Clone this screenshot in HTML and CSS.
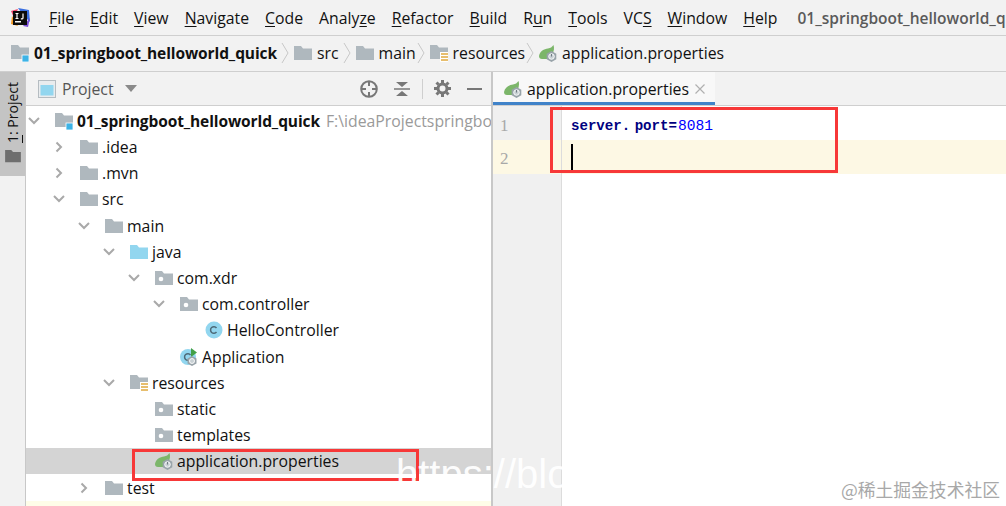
FILE: index.html
```html
<!DOCTYPE html>
<html lang="en">
<head>
<meta charset="utf-8">
<title>IntelliJ IDEA</title>
<link rel="stylesheet" href="styles.css">
</head>
<body>
<svg class="defs" width="0" height="0">
  <defs>
    <symbol id="folder" viewBox="0 0 18 16"><path d="M0 1h7l2 2.500h9V15H0z" fill="#afb8be"/></symbol>
    <symbol id="folder-blue" viewBox="0 0 18 16"><path d="M0 1h7l2 2.500h9V15H0z" fill="#92d6ef"/></symbol>
    <symbol id="package" viewBox="0 0 18 16"><path d="M0 1h7l2 2.500h9V15H0z" fill="#afb8be"/><circle cx="6" cy="9" r="2.300" fill="#fff"/></symbol>
    <symbol id="module" viewBox="0 0 18 18"><path d="M0 1h7l2 2.500h9V15H0z" fill="#afb8be"/><rect x="11" y="11" width="7" height="7" fill="#3db3e6" stroke="#fff" stroke-width=".8"/></symbol>
    <symbol id="resources" viewBox="0 0 18 18"><path d="M0 1h7l2 2.500h9V15H0z" fill="#afb8be"/><rect x="10" y="8" width="8" height="10" fill="#fff"/><path d="M11 10h7M11 13h7M11 16h7" stroke="#e0a93f" stroke-width="1.500"/></symbol>
    <symbol id="spring" viewBox="0 0 18 18"><path d="M0 12C1 7 5 5 9 4.500c2.500-.3 4-1.500 5.500-3.500 1 3 .5 6-1 9L8 15H3C1 15 0 14 0 12z" fill="#7cb66a"/><path d="M12.500 7l4.800 2.800v5.400L12.500 18l-4.800-2.800V9.800z" fill="#98a3a9"/><circle cx="12.500" cy="12.500" r="2.800" fill="#c8d0d4" stroke="#fff" stroke-width=".9"/><path d="M12.500 10v2.500" stroke="#6f7b82"/></symbol>
    <symbol id="cls" viewBox="0 0 18 18"><circle cx="9" cy="9" r="8.500" fill="#92d6ef"/><path d="M11.500 7a3.300 3.300 0 1 0 0 4" fill="none" stroke="#4d6a78" stroke-width="1.500"/></symbol>
    <symbol id="app" viewBox="0 0 18 18"><circle cx="8" cy="9" r="8" fill="#92d6ef"/><path d="M10.500 7a3.300 3.300 0 1 0 0 4" fill="none" stroke="#4d6a78" stroke-width="1.500"/><path d="M11 0l6 4.500-6 4.500z" fill="#43a047"/><path d="M12 8l4.500 2.500v5L12 18l-4.500-2.500v-5z" fill="#98a3a9"/><circle cx="12" cy="13" r="2.500" fill="#c8d0d4" stroke="#fff" stroke-width=".9"/></symbol>
    <symbol id="right" viewBox="0 0 10 12"><path d="M2.500 1.500 7 6l-4.500 4.500" fill="none" stroke="#a9a9a9" stroke-width="2"/></symbol>
    <symbol id="down" viewBox="0 0 12 10"><path d="M1 2l5 5 5-5" fill="none" stroke="#a9a9a9" stroke-width="2"/></symbol>
    <symbol id="sep" viewBox="0 0 8 22"><path d="M1 1l6 10-6 10" fill="none" stroke="#c8c8c8"/></symbol>
  </defs>
</svg>

<div class="menubar">
  <svg class="logo" width="20" height="20" viewBox="0 0 20 20">
    <path d="M1 3 8 1 4 10z" fill="#f0436b"/><path d="M8 0 19 2 20 14 14 8z" fill="#3a6fe0"/><path d="M2 8 8 18 1 16z" fill="#f59a23"/><path d="M13 18 20 10 18 19z" fill="#7b4fd8"/>
    <rect x="3" y="3" width="14" height="14" fill="#0c0c0c"/>
    <rect x="5" y="13" width="6" height="1.500" fill="#fff"/>
    <path d="M5.500 5.500h3M7 5.500v5M5.500 10.500h3M13 5.500v4.500c0 1-1.500 1-2 .5" fill="none" stroke="#fff" stroke-width="1.200"/>
  </svg>
  <nav class="menus">
    <span><u>F</u>ile</span><span><u>E</u>dit</span><span><u>V</u>iew</span><span><u>N</u>avigate</span><span><u>C</u>ode</span><span>Analy<u>z</u>e</span><span><u>R</u>efactor</span><span><u>B</u>uild</span><span>R<u>u</u>n</span><span><u>T</u>ools</span><span>VC<u>S</u></span><span><u>W</u>indow</span><span><u>H</u>elp</span>
  </nav>
  <span class="wintitle">01_springboot_helloworld_quick</span>
</div>

<div class="crumbs">
  <svg class="ic18" width="18" height="18"><use href="#module"/></svg><b>01_springboot_helloworld_quick</b>
  <svg class="sep" width="8" height="22"><use href="#sep"/></svg>
  <svg class="ic18" width="18" height="16"><use href="#folder"/></svg><span>src</span>
  <svg class="sep" width="8" height="22"><use href="#sep"/></svg>
  <svg class="ic18" width="18" height="16"><use href="#folder"/></svg><span>main</span>
  <svg class="sep tight" width="8" height="22"><use href="#sep"/></svg>
  <svg class="ic18" width="18" height="18"><use href="#resources"/></svg><span>resources</span>
  <svg class="sep tight" width="8" height="22"><use href="#sep"/></svg>
  <svg class="ic18" width="18" height="18"><use href="#spring"/></svg><span>application.properties</span>
</div>

<div class="main">
  <aside class="stripe">
    <div class="stripe-btn">
      <span class="stripe-label"><u>1</u>: Project</span>
      <svg width="16" height="14" viewBox="0 0 18 16"><path d="M0 1h7l2 2.500h9V15H0z" fill="#6e6e6e"/></svg>
    </div>
  </aside>

  <section class="project">
    <header class="panel-head">
      <svg class="panel-ic" width="18" height="18" viewBox="0 0 18 18"><rect x=".5" y=".5" width="17" height="17" fill="#e9ecee" stroke="#b5bcc1"/><rect x="2.500" y="5" width="13" height="10.500" fill="#92d6ef"/></svg>
      <span class="panel-title">Project</span>
      <svg class="caret" width="12" height="7"><path d="M0 0h12L6 7z" fill="#8a8a8a"/></svg>
      <div class="tools">
        <svg width="18" height="18" viewBox="0 0 18 18"><circle cx="9" cy="9" r="7.800" fill="none" stroke="#777" stroke-width="2"/><path d="M9 1v5M9 12v5M1 9h5M12 9h5" stroke="#777" stroke-width="2"/></svg>
        <svg width="18" height="18" viewBox="0 0 18 18"><path d="M1 9h16" stroke="#777" stroke-width="1.500"/><path d="M3 2h12L9 7zM3 16h12L9 11z" fill="#777"/></svg>
        <i class="tool-sep"></i>
        <svg width="17" height="17" viewBox="0 0 17 17"><circle cx="8.500" cy="8.500" r="4.500" fill="none" stroke="#777" stroke-width="3"/><path d="M8.500 0v3M8.500 14v3M0 8.500h3M14 8.500h3M2.500 2.500l2 2M12.500 12.500l2 2M14.500 2.500l-2 2M4.500 12.500l-2 2" stroke="#777" stroke-width="3"/></svg>
        <i class="minus"></i>
      </div>
    </header>
    <div class="tree">
      <div class="row l0"><svg class="arrow" width="12" height="10"><use href="#down"/></svg><svg class="ic" width="18" height="18"><use href="#module"/></svg><b>01_springboot_helloworld_quick</b><span class="path">F:\ideaProjectspringboot</span></div>
      <div class="row l1"><svg class="arrow" width="12" height="12"><use href="#right"/></svg><svg class="ic" width="18" height="16"><use href="#folder"/></svg><span>.idea</span></div>
      <div class="row l1"><svg class="arrow" width="12" height="12"><use href="#right"/></svg><svg class="ic" width="18" height="16"><use href="#folder"/></svg><span>.mvn</span></div>
      <div class="row l1"><svg class="arrow" width="12" height="10"><use href="#down"/></svg><svg class="ic" width="18" height="16"><use href="#folder"/></svg><span>src</span></div>
      <div class="row l2"><svg class="arrow" width="12" height="10"><use href="#down"/></svg><svg class="ic" width="18" height="16"><use href="#folder"/></svg><span>main</span></div>
      <div class="row l3"><svg class="arrow" width="12" height="10"><use href="#down"/></svg><svg class="ic" width="18" height="16"><use href="#folder-blue"/></svg><span>java</span></div>
      <div class="row l4"><svg class="arrow" width="12" height="10"><use href="#down"/></svg><svg class="ic" width="18" height="16"><use href="#package"/></svg><span>com.xdr</span></div>
      <div class="row l5"><svg class="arrow" width="12" height="10"><use href="#down"/></svg><svg class="ic" width="18" height="16"><use href="#package"/></svg><span>com.controller</span></div>
      <div class="row l6"><i class="arrow"></i><svg class="ic" width="18" height="18"><use href="#cls"/></svg><span>HelloController</span></div>
      <div class="row l5"><i class="arrow"></i><svg class="ic" width="18" height="18"><use href="#app"/></svg><span>Application</span></div>
      <div class="row l3"><svg class="arrow" width="12" height="10"><use href="#down"/></svg><svg class="ic" width="18" height="18"><use href="#resources"/></svg><span>resources</span></div>
      <div class="row l4"><i class="arrow"></i><svg class="ic" width="18" height="16"><use href="#package"/></svg><span>static</span></div>
      <div class="row l4"><i class="arrow"></i><svg class="ic" width="18" height="16"><use href="#package"/></svg><span>templates</span></div>
      <div class="row l4 selected"><i class="arrow"></i><svg class="ic" width="18" height="18"><use href="#spring"/></svg><span>application.properties</span></div>
      <div class="row l2"><svg class="arrow" width="12" height="12"><use href="#right"/></svg><svg class="ic" width="18" height="16"><use href="#folder"/></svg><span>test</span></div>
      <div class="row tinted"></div>
    </div>
  </section>

  <section class="editor">
    <div class="tabs">
      <div class="tab">
        <svg width="18" height="18"><use href="#spring"/></svg>
        <span>application.properties</span>
        <svg class="close" width="10" height="10"><path d="M.5.500l9 9M9.500.500l-9 9" stroke="#b0b0b0" stroke-width="1.200"/></svg>
      </div>
    </div>
    <div class="code">
      <div class="gutter">
        <div class="num">1</div>
        <div class="num current">2</div>
      </div>
      <div class="lines">
        <div class="line"><span class="key">server. port</span>=<span class="val">8081</span></div>
        <div class="line current"><i class="cursor"></i></div>
      </div>
    </div>
  </section>
</div>

<div class="mark mark-top"></div>
<div class="mark mark-tree"></div>
<div class="wm-url">https://blog</div>
<div class="wm-site">@稀土掘金技术社区</div>
</body>
</html>
```

FILE: styles.css
```css
* { box-sizing: border-box; }
html, body { margin: 0; height: 100%; overflow: hidden; }
body {
  width: 1006px;
  height: 506px;
  position: relative;
  display: flex;
  flex-direction: column;
  background: #f2f2f2;
  color: #111;
  font: 15.8px "Open Sans", "Noto Sans", sans-serif;
}
.defs { position: absolute; }
u { text-underline-offset: 2px; text-decoration-thickness: 1px; }

.menubar {
  height: 36px;
  flex: none;
  display: flex;
  align-items: center;
  padding-left: 10px;
  border-bottom: 1px solid #cfcfcf;
  white-space: nowrap;
  overflow: hidden;
}
.logo { flex: none; margin-right: 19px; }
.menus { display: flex; gap: 16px; }
.wintitle { margin-left: 20px; font-weight: 600; font-size: 15.500px; color: #5a5a5a; }

.crumbs {
  height: 36px;
  flex: none;
  display: flex;
  align-items: center;
  padding: 0 0 2px 11px;
  border-bottom: 1px solid #cfcfcf;
  white-space: nowrap;
}
.crumbs b { font-weight: 700; font-size: 15.500px; margin-left: 5px; letter-spacing: -.1px; }
.crumbs span { margin-left: 5px; }
.ic18 { flex: none; }
.sep { flex: none; margin: 0 5px 0 4px; }
.sep.tight { margin-left: 1px; }

.main { flex: 1; display: flex; min-height: 0; }

.stripe { width: 26px; flex: none; border-right: 1px solid #c8c8c8; background: #f2f2f2; }
.stripe-btn {
  height: 104px;
  background: #c4c4c4;
  display: flex;
  flex-direction: column;
  align-items: center;
  gap: 6px;
  padding-top: 10px;
  font-size: 14px;
}
.stripe-label { writing-mode: vertical-rl; transform: rotate(180deg); white-space: nowrap; }

.project { width: 467px; flex: none; display: flex; flex-direction: column; background: #fff; border-right: 2px solid #c8c8c8; overflow: hidden; }
.panel-head {
  height: 34px;
  flex: none;
  display: flex;
  align-items: center;
  padding-left: 12px;
  background: #f2f2f2;
  border-bottom: 1px solid #cfcfcf;
}
.panel-ic { flex: none; }
.panel-title { margin-left: 6px; color: #555; }
.caret { margin-left: 11px; }
.tools { margin-left: auto; display: flex; align-items: center; gap: 15px; padding-right: 9px; }
.tool-sep { width: 1px; height: 20px; background: #cfcfcf; margin: 0 -4px; }
.minus { width: 15px; height: 2px; background: #777; margin-left: 1px; }

.tree { padding-top: 1.800px; }
.row { height: 26.200px; display: flex; align-items: center; white-space: nowrap; }
.arrow { flex: none; width: 12px; margin-right: 15px; }
.ic { flex: none; margin-right: 4px; }
.row b { font-weight: 700; font-size: 15.500px; letter-spacing: -.1px; }
.path { color: #9a9a9a; margin-left: 6px; }
.l0 { padding-left: 2px; }
.l1 { padding-left: 27px; }
.l2 { padding-left: 52px; }
.l3 { padding-left: 77px; }
.l4 { padding-left: 102px; }
.l5 { padding-left: 127px; }
.l6 { padding-left: 152px; }
.selected { background: #d4d4d4; }
.tinted { background: #fefde8; }

.editor { flex: 1; display: flex; flex-direction: column; min-width: 0; }
.tabs { height: 34px; flex: none; border-bottom: 1px solid #cfcfcf; }
.tab {
  width: 222px;
  height: 33px;
  display: flex;
  align-items: center;
  padding: 4px 0 0 11px;
  gap: 5px;
  background: #f8f8f8;
  border-bottom: 3px solid #4083c9;
}
.tab svg { flex: none; }
.close { margin-left: 1px; }
.code { flex: 1; display: flex; background: #fff; }
.gutter { width: 69px; flex: none; padding-top: .5px; background: #f0f0f0; border-right: 1px solid #dcdcdc; }
.num { height: 33.500px; padding: 5px 0 0 7px; display: flex; align-items: center; color: #a8a8a8; font: 17px "Liberation Serif", serif; }
.num.current { background: #fdf8e4; }
.lines { flex: 1; padding-top: .5px; }
.line { height: 33.500px; display: flex; align-items: center; padding: 5px 0 0 9px; font: 700 14.100px "Liberation Mono", monospace; color: #000080; white-space: pre; }
.line.current { background: #fdf8e4; }
.key { color: #000080; word-spacing: -4px; }
.val { color: #0000ff; font-weight: 400; font-size: 14.600px; margin-left: 1px; }
.cursor { width: 2px; height: 26px; margin-top: -5px; background: #000; }

.mark { position: absolute; border: 3px solid #f73838; }
.mark-top { left: 550px; top: 107px; width: 288px; height: 66px; }
.mark-tree { left: 132px; top: 449px; width: 287px; height: 32px; }
.wm-url { position: absolute; left: 396px; top: 452px; font: 40px "Liberation Sans", sans-serif; color: #fff; white-space: nowrap; opacity: .95; }
.wm-site { position: absolute; right: 6px; top: 476px; font: 17.800px "Noto Sans CJK SC", sans-serif; color: #a8a8a8; white-space: nowrap; }
```
